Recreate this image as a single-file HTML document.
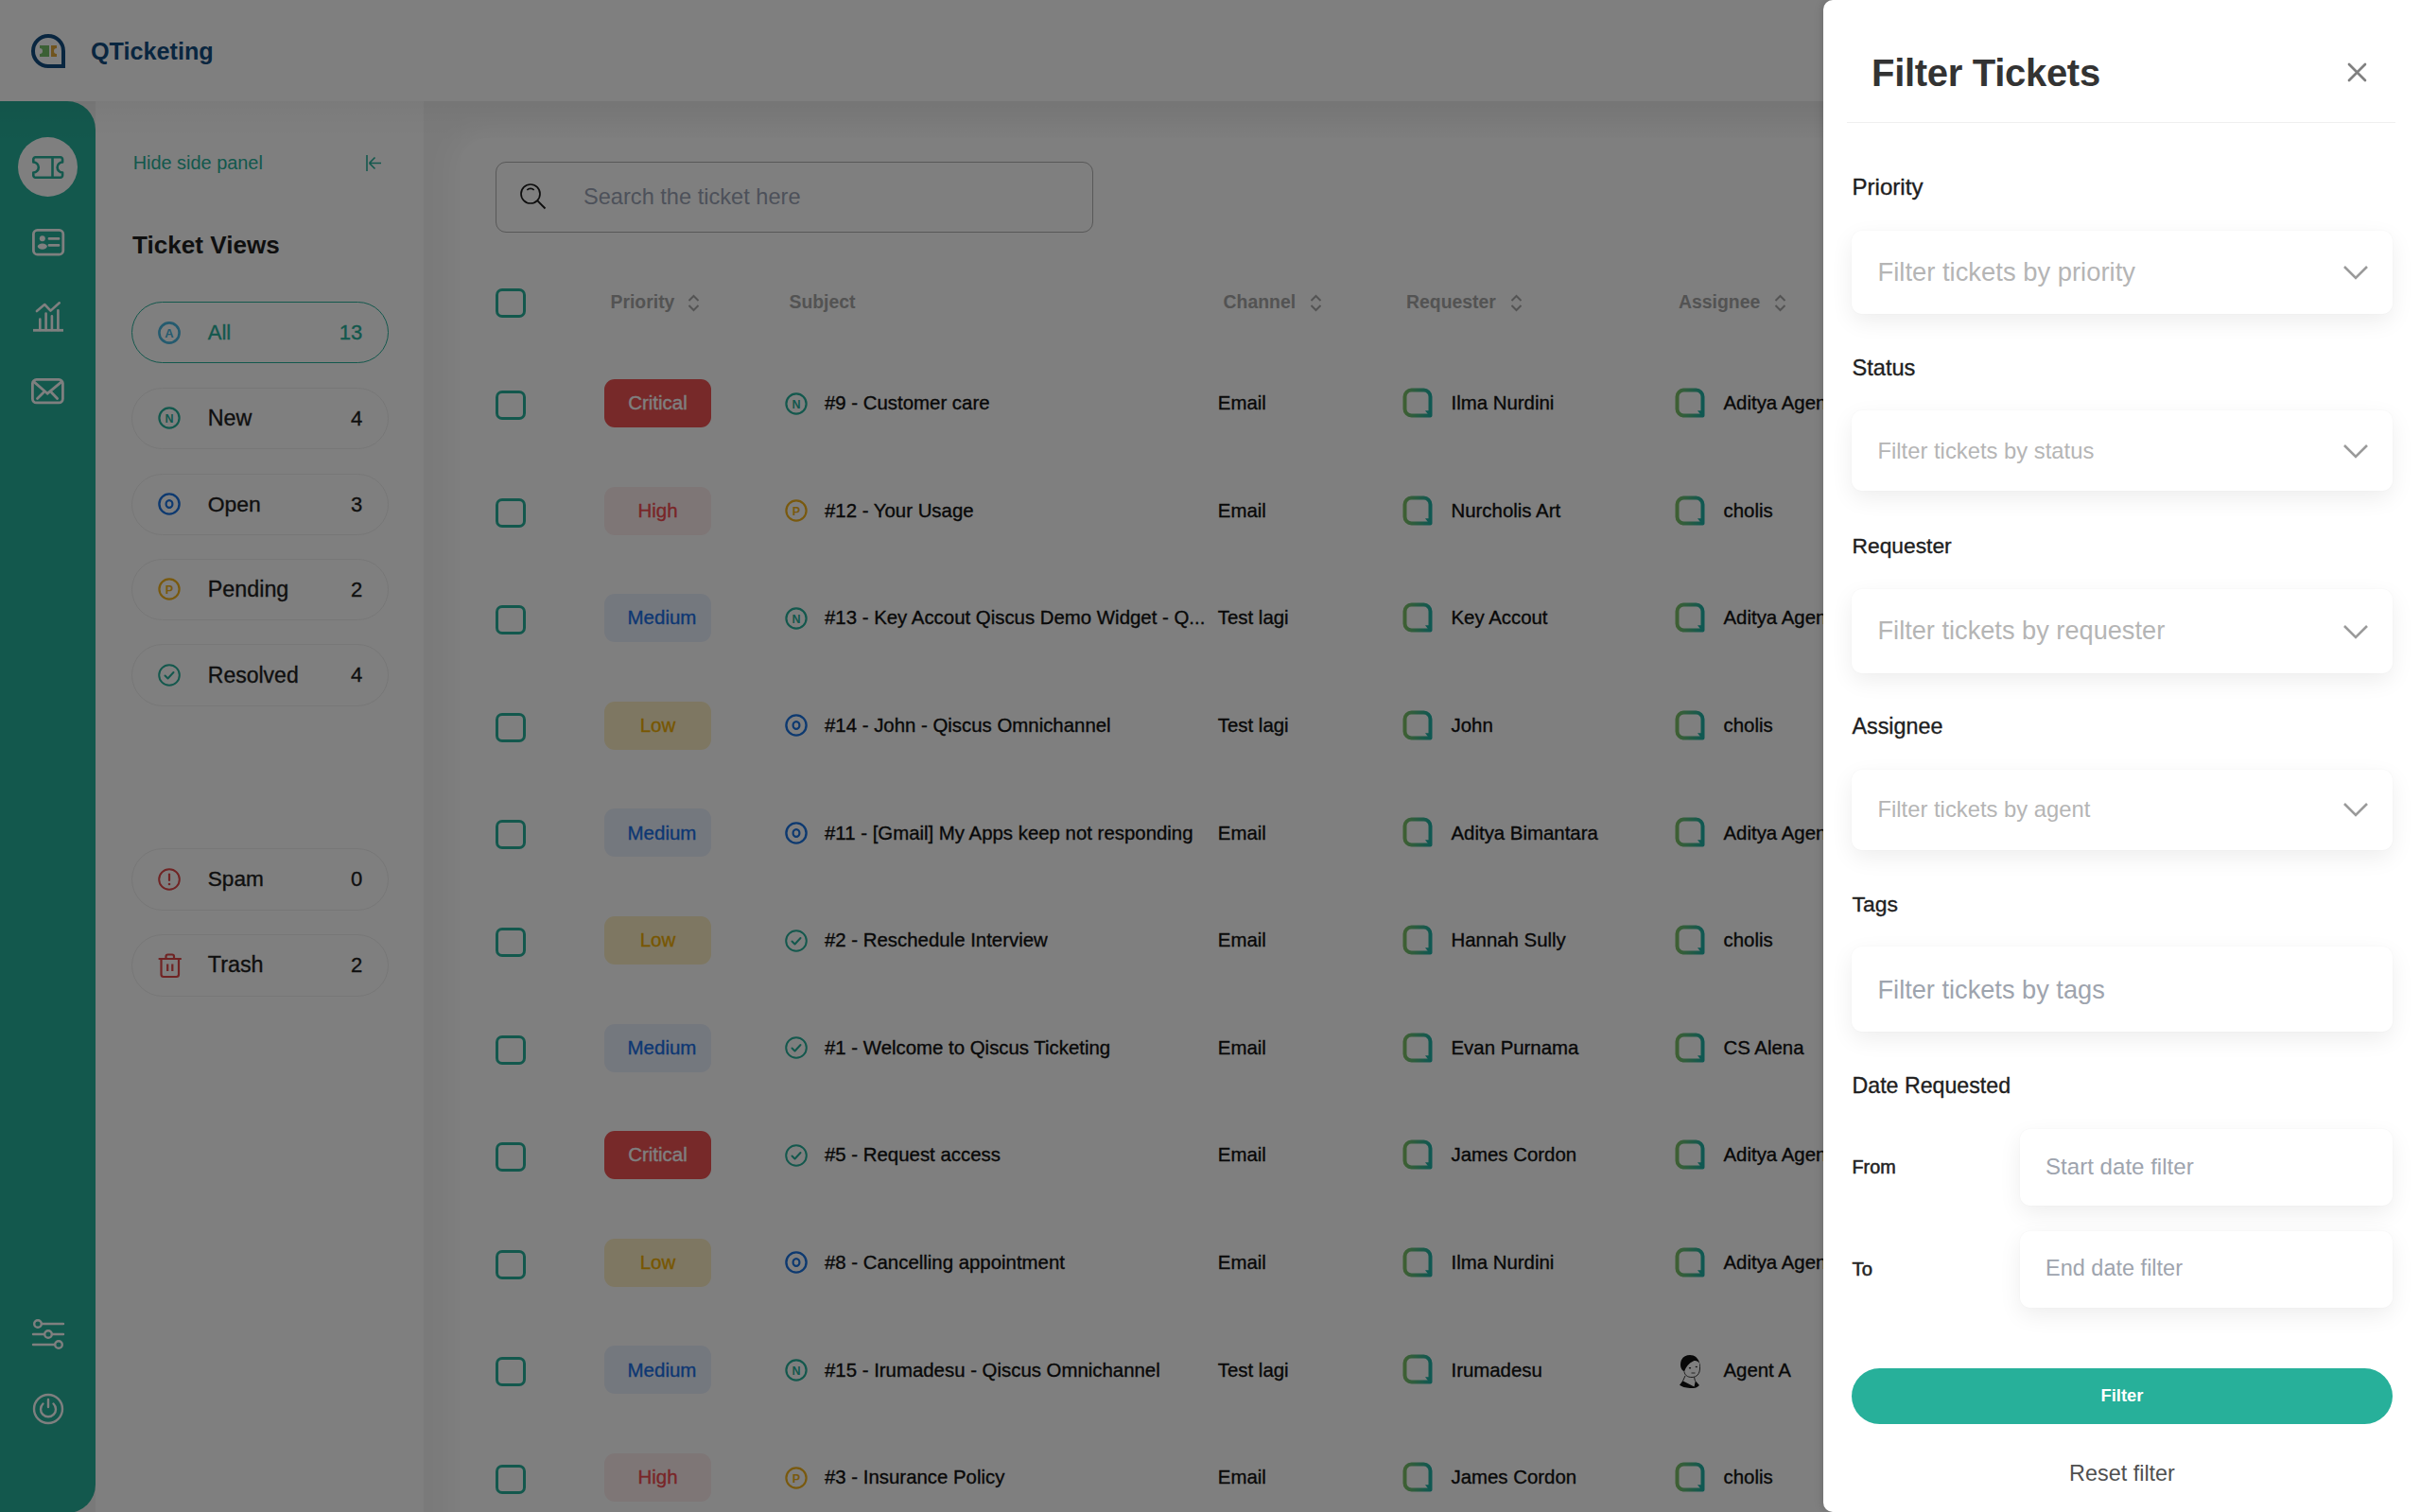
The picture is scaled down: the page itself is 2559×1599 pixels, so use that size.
<!DOCTYPE html>
<html><head><meta charset="utf-8"><style>
html,body{margin:0;padding:0;}
body{width:2559px;height:1599px;overflow:hidden;position:relative;font-family:"Liberation Sans", sans-serif;}
.t{position:absolute;white-space:nowrap;line-height:1;}
.m{-webkit-text-stroke:0.35px currentColor;}
svg{overflow:visible;}
#fp{position:absolute;left:0;top:0;width:2559px;height:1599px;z-index:20;}
</style></head><body>
<div style="position:absolute;left:0.0px;top:0.0px;width:2559.0px;height:1599.0px;background:#ffffff;"></div>
<div style="position:absolute;left:448.0px;top:107.0px;width:2111.0px;height:1492.0px;background:#f5f5f5;"></div>
<div style="position:absolute;left:486.0px;top:146.0px;width:2214.0px;height:1654.0px;background:#ffffff;border-radius:30px;box-shadow:0 0 28px 10px #ffffff;"></div>
<div style="position:absolute;left:101.0px;top:107.0px;width:347.0px;height:1492.0px;background:#ffffff;"></div>
<div style="position:absolute;left:0.0px;top:107.0px;width:2559.0px;height:43.0px;background:linear-gradient(to bottom, rgba(0,0,0,0.04), rgba(0,0,0,0.015) 45%, rgba(0,0,0,0));z-index:2;"></div>
<div style="position:absolute;left:0.0px;top:0.0px;width:2559.0px;height:107.0px;background:#ffffff;z-index:2;"></div>
<div style="position:absolute;left:0;top:0;z-index:3;"><svg style="position:absolute;left:33.0px;top:36.0px;" width="36" height="36" viewBox="0 0 36 36" fill="none"><path d="M18 2 A16 16 0 1 0 18 34 L34 34 L34 18 A16 16 0 0 0 18 2 Z" stroke="#134c80" stroke-width="4"/><path d="M9 12 H19 V24 H9 V21 A3 3 0 0 0 9 15 Z" fill="#78c06a"/><path d="M21 12 H27 V15 A3 3 0 0 0 27 21 V24 H21 Z" fill="#e0a83a"/></svg>
<div class="t" style="left:96.0px;top:41.97px;font-size:25.2px;color:#134c80;font-weight:700;">QTicketing</div>
</div><div style="position:absolute;left:0.0px;top:107.0px;width:101.0px;height:1492.0px;background:#f2f2f2;"></div>
<div style="position:absolute;left:0.0px;top:107.0px;width:101.0px;height:1493.0px;background:#27b09a;border-radius:0 30px 30px 0;"></div>
<div style="position:absolute;left:19.0px;top:145.0px;width:63.0px;height:63.0px;background:#fff;border-radius:50%;"></div>
<svg style="position:absolute;left:34.0px;top:164.8px;" width="34" height="24" viewBox="0 0 34 24" fill="none"><path d="M3.5 1.3 H29.9 A2.2 2.2 0 0 1 32.1 3.5 V6.5 A5.5 5.5 0 0 0 32.1 17.5 V20.5 A2.2 2.2 0 0 1 29.9 22.7 H3.5 A2.2 2.2 0 0 1 1.3 20.5 V17.5 A5.5 5.5 0 0 0 1.3 6.5 V3.5 A2.2 2.2 0 0 1 3.5 1.3 Z" stroke="#27b09a" stroke-width="2.6" stroke-linejoin="round"/><path d="M21.5 2 V22" stroke="#27b09a" stroke-width="2.6"/></svg>
<svg style="position:absolute;left:33.6px;top:241.8px;" width="35" height="29" viewBox="0 0 35 29" fill="none"><rect x="1.4" y="1.4" width="31.4" height="25.7" rx="4.2" stroke="#ffffff" stroke-width="2.8"/><circle cx="10.8" cy="10.2" r="3" fill="#ffffff"/><ellipse cx="10.8" cy="18.6" rx="5" ry="3.1" fill="#ffffff"/><path d="M18 10.4 H28 M18 17.4 H28" stroke="#ffffff" stroke-width="2.8" stroke-linecap="round"/></svg>
<svg style="position:absolute;left:35.0px;top:318.9px;" width="33" height="33" viewBox="0 0 33 33" fill="none"><path d="M3.9 10 L12.2 3 L18.5 9.6 L27.8 1.3" stroke="#ffffff" stroke-width="2.6" stroke-linecap="round" stroke-linejoin="round"/><path d="M7.3 30 V18.5 M13.6 30 V12.5 M19.9 30 V15.3 M26.4 30 V9.2" stroke="#ffffff" stroke-width="2.6" stroke-linecap="round"/><path d="M0 30.3 H32" stroke="#ffffff" stroke-width="2.8"/></svg>
<svg style="position:absolute;left:33.0px;top:399.7px;" width="35" height="28" viewBox="0 0 35 28" fill="none"><rect x="1.4" y="1.4" width="32" height="24.5" rx="4.2" stroke="#ffffff" stroke-width="2.8"/><path d="M3 3.9 L17.2 16.2 L32 3.9 M6.5 21.5 L12.8 15.2 M27.6 21.5 L21.6 15.2" stroke="#ffffff" stroke-width="2.8" stroke-linecap="round"/></svg>
<svg style="position:absolute;left:34.0px;top:1394.0px;" width="34" height="34" viewBox="0 0 34 34" fill="none"><path d="M10 6 H33 M1 17 H12 M21 17 H33 M1 28 H24" stroke="#ffffff" stroke-width="2.4" stroke-linecap="round"/><circle cx="6" cy="6" r="3.8" stroke="#ffffff" stroke-width="2.4"/><circle cx="17" cy="17" r="3.8" stroke="#ffffff" stroke-width="2.4"/><circle cx="28" cy="28" r="3.8" stroke="#ffffff" stroke-width="2.4"/></svg>
<svg style="position:absolute;left:34.0px;top:1473.0px;" width="34" height="34" viewBox="0 0 34 34" fill="none"><circle cx="17" cy="17" r="15" stroke="#ffffff" stroke-width="2.4"/><path d="M11.5 11.5 A8 8 0 1 0 22.5 11.5" stroke="#ffffff" stroke-width="2.4" stroke-linecap="round"/><path d="M17 7 V15" stroke="#ffffff" stroke-width="2.4" stroke-linecap="round"/></svg>
<div class="t" style="left:140.7px;top:162.55px;font-size:19.9px;color:#27b09a;font-weight:400;">Hide side panel</div>
<svg style="position:absolute;left:387.0px;top:163.0px;" width="18" height="19" viewBox="0 0 18 19" fill="none"><path d="M1 1 V18" stroke="#27b09a" stroke-width="1.6"/><path d="M3.5 9.5 H16 M3.5 9.5 L9.5 3.5 M3.5 9.5 L9.5 15.5" stroke="#27b09a" stroke-width="1.6"/></svg>
<div class="t" style="left:140.0px;top:245.91px;font-size:26.1px;color:#1e1e1e;font-weight:700;">Ticket Views</div>
<div style="position:absolute;left:139.0px;top:319.0px;width:272.0px;height:65.0px;border:1.5px solid #27b09a;border-radius:33px;box-sizing:border-box;"></div>
<svg style="position:absolute;left:167.0px;top:339.8px;" width="24" height="24" viewBox="0 0 24 24" fill="none"><circle cx="12" cy="12" r="10.6" stroke="#4ab6de" stroke-width="2.6"/><text x="12" y="16.8" text-anchor="middle" font-family="Liberation Sans" font-weight="700" font-size="13" fill="#4ab6de">A</text></svg>
<div class="t m" style="left:219.8px;top:341.38px;font-size:22px;color:#27b09a;font-weight:400;">All</div>
<div class="t m" style="right:2175.8px;top:341.38px;font-size:22px;color:#27b09a;font-weight:400;">13</div>
<div style="position:absolute;left:139.0px;top:409.5px;width:272.0px;height:65.5px;border:1.5px solid #eeeeee;border-radius:33px;box-sizing:border-box;"></div>
<svg style="position:absolute;left:167.0px;top:430.3px;" width="24" height="24" viewBox="0 0 24 24" fill="none"><circle cx="12" cy="12" r="10.6" stroke="#27b09a" stroke-width="2.2"/><text x="12" y="16.8" text-anchor="middle" font-family="Liberation Sans" font-weight="700" font-size="12.5" fill="#27b09a">N</text></svg>
<div class="t m" style="left:219.8px;top:430.78px;font-size:23.3px;color:#1e1e1e;font-weight:400;">New</div>
<div class="t m" style="right:2175.8px;top:431.88px;font-size:22px;color:#1e1e1e;font-weight:400;">4</div>
<div style="position:absolute;left:139.0px;top:500.5px;width:272.0px;height:65.5px;border:1.5px solid #eeeeee;border-radius:33px;box-sizing:border-box;"></div>
<svg style="position:absolute;left:167.0px;top:521.3px;" width="24" height="24" viewBox="0 0 24 24" fill="none"><circle cx="12" cy="12" r="10.6" stroke="#1a73e0" stroke-width="2.4"/><ellipse cx="12" cy="12" rx="3.4" ry="3.9" stroke="#1a73e0" stroke-width="2.2"/></svg>
<div class="t m" style="left:219.8px;top:522.12px;font-size:22.9px;color:#1e1e1e;font-weight:400;">Open</div>
<div class="t m" style="right:2175.8px;top:522.88px;font-size:22px;color:#1e1e1e;font-weight:400;">3</div>
<div style="position:absolute;left:139.0px;top:590.5px;width:272.0px;height:65.5px;border:1.5px solid #eeeeee;border-radius:33px;box-sizing:border-box;"></div>
<svg style="position:absolute;left:167.0px;top:611.3px;" width="24" height="24" viewBox="0 0 24 24" fill="none"><circle cx="12" cy="12" r="10.6" stroke="#f2b31c" stroke-width="2.2"/><text x="12" y="16.8" text-anchor="middle" font-family="Liberation Sans" font-weight="700" font-size="12.5" fill="#f2b31c">P</text></svg>
<div class="t m" style="left:219.8px;top:611.78px;font-size:23.3px;color:#1e1e1e;font-weight:400;">Pending</div>
<div class="t m" style="right:2175.8px;top:612.88px;font-size:22px;color:#1e1e1e;font-weight:400;">2</div>
<div style="position:absolute;left:139.0px;top:681.0px;width:272.0px;height:65.5px;border:1.5px solid #eeeeee;border-radius:33px;box-sizing:border-box;"></div>
<svg style="position:absolute;left:167.0px;top:701.8px;" width="24" height="24" viewBox="0 0 24 24" fill="none"><circle cx="12" cy="12" r="10.8" stroke="#27b09a" stroke-width="2"/><path d="M7.5 12.5 L10.5 15.5 L16.5 9" stroke="#27b09a" stroke-width="2" stroke-linecap="round" stroke-linejoin="round"/></svg>
<div class="t m" style="left:219.8px;top:702.53px;font-size:23.0px;color:#1e1e1e;font-weight:400;">Resolved</div>
<div class="t m" style="right:2175.8px;top:703.38px;font-size:22px;color:#1e1e1e;font-weight:400;">4</div>
<div style="position:absolute;left:139.0px;top:897.0px;width:272.0px;height:65.5px;border:1.5px solid #eeeeee;border-radius:33px;box-sizing:border-box;"></div>
<svg style="position:absolute;left:167.0px;top:917.8px;" width="24" height="24" viewBox="0 0 24 24" fill="none"><circle cx="12" cy="12" r="10.8" stroke="#e04848" stroke-width="2"/><path d="M12 6.5 V13" stroke="#e04848" stroke-width="2.2" stroke-linecap="round"/><circle cx="12" cy="17" r="1.3" fill="#e04848"/></svg>
<div class="t m" style="left:219.8px;top:918.87px;font-size:22.6px;color:#1e1e1e;font-weight:400;">Spam</div>
<div class="t m" style="right:2175.8px;top:919.38px;font-size:22px;color:#1e1e1e;font-weight:400;">0</div>
<div style="position:absolute;left:139.0px;top:988.0px;width:272.0px;height:65.5px;border:1.5px solid #eeeeee;border-radius:33px;box-sizing:border-box;"></div>
<svg style="position:absolute;left:166.5px;top:1008.3px;" width="26" height="26" viewBox="0 0 26 26" fill="none"><path d="M1.5 6 H24" stroke="#e04848" stroke-width="2.2" stroke-linecap="round"/><path d="M8.5 6 V3.5 A2 2 0 0 1 10.5 1.5 H15 A2 2 0 0 1 17 3.5 V6" stroke="#e04848" stroke-width="2.2"/><path d="M3.5 6.5 V22.5 A2.5 2.5 0 0 0 6 25 H19.5 A2.5 2.5 0 0 0 22 22.5 V6.5" stroke="#e04848" stroke-width="2.2"/><path d="M10.2 11.5 V19 M15.3 11.5 V19" stroke="#e04848" stroke-width="2.2"/></svg>
<div class="t m" style="left:219.8px;top:1009.28px;font-size:23.3px;color:#1e1e1e;font-weight:400;">Trash</div>
<div class="t m" style="right:2175.8px;top:1010.38px;font-size:22px;color:#1e1e1e;font-weight:400;">2</div>
<div style="position:absolute;left:524.0px;top:171.4px;width:631.5px;height:74.4px;border:1.5px solid #b0b0b0;border-radius:11px;box-sizing:border-box;"></div>
<svg style="position:absolute;left:549.0px;top:193.0px;" width="30" height="30" viewBox="0 0 30 30" fill="none"><circle cx="12" cy="12" r="10" stroke="#1a1a1a" stroke-width="1.7"/><path d="M19.2 19.2 L27.5 27.5" stroke="#1a1a1a" stroke-width="1.9"/><path d="M8.3 8 A5 5 0 0 1 15.7 8" stroke="#1a1a1a" stroke-width="1.6"/></svg>
<div class="t" style="left:617.0px;top:196.72px;font-size:23.6px;color:#9aa3b5;font-weight:400;">Search the ticket here</div>
<div style="position:absolute;left:524.0px;top:305.0px;width:31.5px;height:31.0px;border:3.2px solid #27b09a;border-radius:7px;box-sizing:border-box;"></div>
<div class="t" style="left:645.5px;top:309.58px;font-size:19.4px;color:#a6a6a6;font-weight:700;">Priority</div>
<svg style="position:absolute;left:726.5px;top:310.5px;" width="13" height="19" viewBox="0 0 13 19" fill="none"><path d="M1.5 7 L6.5 2 L11.5 7 M1.5 12 L6.5 17 L11.5 12" stroke="#a8a8a8" stroke-width="2"/></svg>
<div class="t" style="left:834.5px;top:310.08px;font-size:19.4px;color:#a6a6a6;font-weight:700;">Subject</div>
<div class="t" style="left:1293.6px;top:309.58px;font-size:19.4px;color:#a6a6a6;font-weight:700;">Channel</div>
<svg style="position:absolute;left:1384.5px;top:310.5px;" width="13" height="19" viewBox="0 0 13 19" fill="none"><path d="M1.5 7 L6.5 2 L11.5 7 M1.5 12 L6.5 17 L11.5 12" stroke="#a8a8a8" stroke-width="2"/></svg>
<div class="t" style="left:1487.0px;top:309.58px;font-size:19.4px;color:#a6a6a6;font-weight:700;">Requester</div>
<svg style="position:absolute;left:1596.5px;top:310.5px;" width="13" height="19" viewBox="0 0 13 19" fill="none"><path d="M1.5 7 L6.5 2 L11.5 7 M1.5 12 L6.5 17 L11.5 12" stroke="#a8a8a8" stroke-width="2"/></svg>
<div class="t" style="left:1775.0px;top:309.58px;font-size:19.4px;color:#a6a6a6;font-weight:700;">Assignee</div>
<svg style="position:absolute;left:1875.5px;top:310.5px;" width="13" height="19" viewBox="0 0 13 19" fill="none"><path d="M1.5 7 L6.5 2 L11.5 7 M1.5 12 L6.5 17 L11.5 12" stroke="#a8a8a8" stroke-width="2"/></svg>
<div style="position:absolute;left:524.0px;top:413.0px;width:31.5px;height:31.0px;border:3.2px solid #27b09a;border-radius:7px;box-sizing:border-box;"></div>
<div style="position:absolute;left:639.0px;top:401.0px;width:113.0px;height:51.0px;background:#ee5353;border-radius:11px;"></div>
<div class="t m" style="left:295.5px;width:800px;text-align:center;top:416.15px;font-size:20.5px;color:#ffffff;font-weight:400;">Critical</div>
<svg style="position:absolute;left:830.1px;top:414.5px;" width="24" height="24" viewBox="0 0 24 24" fill="none"><circle cx="12" cy="12" r="10.6" stroke="#27b09a" stroke-width="2.2"/><text x="12" y="16.8" text-anchor="middle" font-family="Liberation Sans" font-weight="700" font-size="12.5" fill="#27b09a">N</text></svg>
<div class="t m" style="left:872.0px;top:416.23px;font-size:20.4px;color:#111111;font-weight:400;">#9 - Customer care</div>
<div class="t m" style="left:1287.8px;top:416.23px;font-size:20.4px;color:#111111;font-weight:400;">Email</div>
<svg style="position:absolute;left:1483.0px;top:410.0px;" width="32" height="32" viewBox="0 0 32 32" fill="none"><defs><linearGradient id="bg" x1="0" y1="0" x2="1" y2="0"><stop offset="0" stop-color="#7cbf66"/><stop offset="1" stop-color="#1fb0a4"/></linearGradient></defs><path d="M9.5 2.5 H22.5 A7 7 0 0 1 29.5 9.5 V29.5 H9.5 A7 7 0 0 1 2.5 22.5 V9.5 A7 7 0 0 1 9.5 2.5 Z" stroke="url(#bg)" stroke-width="4" stroke-linejoin="round"/><path d="M24 24.3 L28 24.3 L28.5 30 Z" fill="#1fb0a4"/></svg>
<div class="t m" style="left:1534.5px;top:416.23px;font-size:20.4px;color:#111111;font-weight:400;">Ilma Nurdini</div>
<svg style="position:absolute;left:1771.0px;top:410.0px;" width="32" height="32" viewBox="0 0 32 32" fill="none"><defs><linearGradient id="bg" x1="0" y1="0" x2="1" y2="0"><stop offset="0" stop-color="#7cbf66"/><stop offset="1" stop-color="#1fb0a4"/></linearGradient></defs><path d="M9.5 2.5 H22.5 A7 7 0 0 1 29.5 9.5 V29.5 H9.5 A7 7 0 0 1 2.5 22.5 V9.5 A7 7 0 0 1 9.5 2.5 Z" stroke="url(#bg)" stroke-width="4" stroke-linejoin="round"/><path d="M24 24.3 L28 24.3 L28.5 30 Z" fill="#1fb0a4"/></svg>
<div class="t m" style="left:1822.5px;top:416.23px;font-size:20.4px;color:#111111;font-weight:400;">Aditya Agent</div>
<div style="position:absolute;left:524.0px;top:526.6px;width:31.5px;height:31.0px;border:3.2px solid #27b09a;border-radius:7px;box-sizing:border-box;"></div>
<div style="position:absolute;left:639.0px;top:514.6px;width:113.0px;height:51.0px;background:#fdeced;border-radius:11px;"></div>
<div class="t m" style="left:295.5px;width:800px;text-align:center;top:529.75px;font-size:20.5px;color:#f24a4f;font-weight:400;">High</div>
<svg style="position:absolute;left:830.1px;top:528.1px;" width="24" height="24" viewBox="0 0 24 24" fill="none"><circle cx="12" cy="12" r="10.6" stroke="#f2b31c" stroke-width="2.2"/><text x="12" y="16.8" text-anchor="middle" font-family="Liberation Sans" font-weight="700" font-size="12.5" fill="#f2b31c">P</text></svg>
<div class="t m" style="left:872.0px;top:529.83px;font-size:20.4px;color:#111111;font-weight:400;">#12 - Your Usage</div>
<div class="t m" style="left:1287.8px;top:529.83px;font-size:20.4px;color:#111111;font-weight:400;">Email</div>
<svg style="position:absolute;left:1483.0px;top:523.6px;" width="32" height="32" viewBox="0 0 32 32" fill="none"><defs><linearGradient id="bg" x1="0" y1="0" x2="1" y2="0"><stop offset="0" stop-color="#7cbf66"/><stop offset="1" stop-color="#1fb0a4"/></linearGradient></defs><path d="M9.5 2.5 H22.5 A7 7 0 0 1 29.5 9.5 V29.5 H9.5 A7 7 0 0 1 2.5 22.5 V9.5 A7 7 0 0 1 9.5 2.5 Z" stroke="url(#bg)" stroke-width="4" stroke-linejoin="round"/><path d="M24 24.3 L28 24.3 L28.5 30 Z" fill="#1fb0a4"/></svg>
<div class="t m" style="left:1534.5px;top:529.83px;font-size:20.4px;color:#111111;font-weight:400;">Nurcholis Art</div>
<svg style="position:absolute;left:1771.0px;top:523.6px;" width="32" height="32" viewBox="0 0 32 32" fill="none"><defs><linearGradient id="bg" x1="0" y1="0" x2="1" y2="0"><stop offset="0" stop-color="#7cbf66"/><stop offset="1" stop-color="#1fb0a4"/></linearGradient></defs><path d="M9.5 2.5 H22.5 A7 7 0 0 1 29.5 9.5 V29.5 H9.5 A7 7 0 0 1 2.5 22.5 V9.5 A7 7 0 0 1 9.5 2.5 Z" stroke="url(#bg)" stroke-width="4" stroke-linejoin="round"/><path d="M24 24.3 L28 24.3 L28.5 30 Z" fill="#1fb0a4"/></svg>
<div class="t m" style="left:1822.5px;top:529.83px;font-size:20.4px;color:#111111;font-weight:400;">cholis</div>
<div style="position:absolute;left:524.0px;top:640.2px;width:31.5px;height:31.0px;border:3.2px solid #27b09a;border-radius:7px;box-sizing:border-box;"></div>
<div style="position:absolute;left:639.0px;top:628.2px;width:113.0px;height:51.0px;background:#e9f0fc;border-radius:11px;"></div>
<div class="t m" style="left:300.0px;width:800px;text-align:center;top:643.35px;font-size:20.5px;color:#1a6fe6;font-weight:400;">Medium</div>
<svg style="position:absolute;left:830.1px;top:641.7px;" width="24" height="24" viewBox="0 0 24 24" fill="none"><circle cx="12" cy="12" r="10.6" stroke="#27b09a" stroke-width="2.2"/><text x="12" y="16.8" text-anchor="middle" font-family="Liberation Sans" font-weight="700" font-size="12.5" fill="#27b09a">N</text></svg>
<div class="t m" style="left:872.0px;top:643.43px;font-size:20.4px;color:#111111;font-weight:400;">#13 - Key Accout Qiscus Demo Widget - Q...</div>
<div class="t m" style="left:1287.8px;top:643.43px;font-size:20.4px;color:#111111;font-weight:400;">Test lagi</div>
<svg style="position:absolute;left:1483.0px;top:637.2px;" width="32" height="32" viewBox="0 0 32 32" fill="none"><defs><linearGradient id="bg" x1="0" y1="0" x2="1" y2="0"><stop offset="0" stop-color="#7cbf66"/><stop offset="1" stop-color="#1fb0a4"/></linearGradient></defs><path d="M9.5 2.5 H22.5 A7 7 0 0 1 29.5 9.5 V29.5 H9.5 A7 7 0 0 1 2.5 22.5 V9.5 A7 7 0 0 1 9.5 2.5 Z" stroke="url(#bg)" stroke-width="4" stroke-linejoin="round"/><path d="M24 24.3 L28 24.3 L28.5 30 Z" fill="#1fb0a4"/></svg>
<div class="t m" style="left:1534.5px;top:643.43px;font-size:20.4px;color:#111111;font-weight:400;">Key Accout</div>
<svg style="position:absolute;left:1771.0px;top:637.2px;" width="32" height="32" viewBox="0 0 32 32" fill="none"><defs><linearGradient id="bg" x1="0" y1="0" x2="1" y2="0"><stop offset="0" stop-color="#7cbf66"/><stop offset="1" stop-color="#1fb0a4"/></linearGradient></defs><path d="M9.5 2.5 H22.5 A7 7 0 0 1 29.5 9.5 V29.5 H9.5 A7 7 0 0 1 2.5 22.5 V9.5 A7 7 0 0 1 9.5 2.5 Z" stroke="url(#bg)" stroke-width="4" stroke-linejoin="round"/><path d="M24 24.3 L28 24.3 L28.5 30 Z" fill="#1fb0a4"/></svg>
<div class="t m" style="left:1822.5px;top:643.43px;font-size:20.4px;color:#111111;font-weight:400;">Aditya Agent</div>
<div style="position:absolute;left:524.0px;top:753.8px;width:31.5px;height:31.0px;border:3.2px solid #27b09a;border-radius:7px;box-sizing:border-box;"></div>
<div style="position:absolute;left:639.0px;top:741.8px;width:113.0px;height:51.0px;background:#fcefc4;border-radius:11px;"></div>
<div class="t m" style="left:295.5px;width:800px;text-align:center;top:756.95px;font-size:20.5px;color:#f0ad00;font-weight:400;">Low</div>
<svg style="position:absolute;left:830.1px;top:755.3px;" width="24" height="24" viewBox="0 0 24 24" fill="none"><circle cx="12" cy="12" r="10.6" stroke="#1a73e0" stroke-width="2.4"/><ellipse cx="12" cy="12" rx="3.4" ry="3.9" stroke="#1a73e0" stroke-width="2.2"/></svg>
<div class="t m" style="left:872.0px;top:757.03px;font-size:20.4px;color:#111111;font-weight:400;">#14 - John - Qiscus Omnichannel</div>
<div class="t m" style="left:1287.8px;top:757.03px;font-size:20.4px;color:#111111;font-weight:400;">Test lagi</div>
<svg style="position:absolute;left:1483.0px;top:750.8px;" width="32" height="32" viewBox="0 0 32 32" fill="none"><defs><linearGradient id="bg" x1="0" y1="0" x2="1" y2="0"><stop offset="0" stop-color="#7cbf66"/><stop offset="1" stop-color="#1fb0a4"/></linearGradient></defs><path d="M9.5 2.5 H22.5 A7 7 0 0 1 29.5 9.5 V29.5 H9.5 A7 7 0 0 1 2.5 22.5 V9.5 A7 7 0 0 1 9.5 2.5 Z" stroke="url(#bg)" stroke-width="4" stroke-linejoin="round"/><path d="M24 24.3 L28 24.3 L28.5 30 Z" fill="#1fb0a4"/></svg>
<div class="t m" style="left:1534.5px;top:757.03px;font-size:20.4px;color:#111111;font-weight:400;">John</div>
<svg style="position:absolute;left:1771.0px;top:750.8px;" width="32" height="32" viewBox="0 0 32 32" fill="none"><defs><linearGradient id="bg" x1="0" y1="0" x2="1" y2="0"><stop offset="0" stop-color="#7cbf66"/><stop offset="1" stop-color="#1fb0a4"/></linearGradient></defs><path d="M9.5 2.5 H22.5 A7 7 0 0 1 29.5 9.5 V29.5 H9.5 A7 7 0 0 1 2.5 22.5 V9.5 A7 7 0 0 1 9.5 2.5 Z" stroke="url(#bg)" stroke-width="4" stroke-linejoin="round"/><path d="M24 24.3 L28 24.3 L28.5 30 Z" fill="#1fb0a4"/></svg>
<div class="t m" style="left:1822.5px;top:757.03px;font-size:20.4px;color:#111111;font-weight:400;">cholis</div>
<div style="position:absolute;left:524.0px;top:867.4px;width:31.5px;height:31.0px;border:3.2px solid #27b09a;border-radius:7px;box-sizing:border-box;"></div>
<div style="position:absolute;left:639.0px;top:855.4px;width:113.0px;height:51.0px;background:#e9f0fc;border-radius:11px;"></div>
<div class="t m" style="left:300.0px;width:800px;text-align:center;top:870.55px;font-size:20.5px;color:#1a6fe6;font-weight:400;">Medium</div>
<svg style="position:absolute;left:830.1px;top:868.9px;" width="24" height="24" viewBox="0 0 24 24" fill="none"><circle cx="12" cy="12" r="10.6" stroke="#1a73e0" stroke-width="2.4"/><ellipse cx="12" cy="12" rx="3.4" ry="3.9" stroke="#1a73e0" stroke-width="2.2"/></svg>
<div class="t m" style="left:872.0px;top:870.63px;font-size:20.4px;color:#111111;font-weight:400;">#11 - [Gmail] My Apps keep not responding</div>
<div class="t m" style="left:1287.8px;top:870.63px;font-size:20.4px;color:#111111;font-weight:400;">Email</div>
<svg style="position:absolute;left:1483.0px;top:864.4px;" width="32" height="32" viewBox="0 0 32 32" fill="none"><defs><linearGradient id="bg" x1="0" y1="0" x2="1" y2="0"><stop offset="0" stop-color="#7cbf66"/><stop offset="1" stop-color="#1fb0a4"/></linearGradient></defs><path d="M9.5 2.5 H22.5 A7 7 0 0 1 29.5 9.5 V29.5 H9.5 A7 7 0 0 1 2.5 22.5 V9.5 A7 7 0 0 1 9.5 2.5 Z" stroke="url(#bg)" stroke-width="4" stroke-linejoin="round"/><path d="M24 24.3 L28 24.3 L28.5 30 Z" fill="#1fb0a4"/></svg>
<div class="t m" style="left:1534.5px;top:870.63px;font-size:20.4px;color:#111111;font-weight:400;">Aditya Bimantara</div>
<svg style="position:absolute;left:1771.0px;top:864.4px;" width="32" height="32" viewBox="0 0 32 32" fill="none"><defs><linearGradient id="bg" x1="0" y1="0" x2="1" y2="0"><stop offset="0" stop-color="#7cbf66"/><stop offset="1" stop-color="#1fb0a4"/></linearGradient></defs><path d="M9.5 2.5 H22.5 A7 7 0 0 1 29.5 9.5 V29.5 H9.5 A7 7 0 0 1 2.5 22.5 V9.5 A7 7 0 0 1 9.5 2.5 Z" stroke="url(#bg)" stroke-width="4" stroke-linejoin="round"/><path d="M24 24.3 L28 24.3 L28.5 30 Z" fill="#1fb0a4"/></svg>
<div class="t m" style="left:1822.5px;top:870.63px;font-size:20.4px;color:#111111;font-weight:400;">Aditya Agent</div>
<div style="position:absolute;left:524.0px;top:981.0px;width:31.5px;height:31.0px;border:3.2px solid #27b09a;border-radius:7px;box-sizing:border-box;"></div>
<div style="position:absolute;left:639.0px;top:969.0px;width:113.0px;height:51.0px;background:#fcefc4;border-radius:11px;"></div>
<div class="t m" style="left:295.5px;width:800px;text-align:center;top:984.15px;font-size:20.5px;color:#f0ad00;font-weight:400;">Low</div>
<svg style="position:absolute;left:830.1px;top:982.5px;" width="24" height="24" viewBox="0 0 24 24" fill="none"><circle cx="12" cy="12" r="10.8" stroke="#27b09a" stroke-width="2"/><path d="M7.5 12.5 L10.5 15.5 L16.5 9" stroke="#27b09a" stroke-width="2" stroke-linecap="round" stroke-linejoin="round"/></svg>
<div class="t m" style="left:872.0px;top:984.23px;font-size:20.4px;color:#111111;font-weight:400;">#2 - Reschedule Interview</div>
<div class="t m" style="left:1287.8px;top:984.23px;font-size:20.4px;color:#111111;font-weight:400;">Email</div>
<svg style="position:absolute;left:1483.0px;top:978.0px;" width="32" height="32" viewBox="0 0 32 32" fill="none"><defs><linearGradient id="bg" x1="0" y1="0" x2="1" y2="0"><stop offset="0" stop-color="#7cbf66"/><stop offset="1" stop-color="#1fb0a4"/></linearGradient></defs><path d="M9.5 2.5 H22.5 A7 7 0 0 1 29.5 9.5 V29.5 H9.5 A7 7 0 0 1 2.5 22.5 V9.5 A7 7 0 0 1 9.5 2.5 Z" stroke="url(#bg)" stroke-width="4" stroke-linejoin="round"/><path d="M24 24.3 L28 24.3 L28.5 30 Z" fill="#1fb0a4"/></svg>
<div class="t m" style="left:1534.5px;top:984.23px;font-size:20.4px;color:#111111;font-weight:400;">Hannah Sully</div>
<svg style="position:absolute;left:1771.0px;top:978.0px;" width="32" height="32" viewBox="0 0 32 32" fill="none"><defs><linearGradient id="bg" x1="0" y1="0" x2="1" y2="0"><stop offset="0" stop-color="#7cbf66"/><stop offset="1" stop-color="#1fb0a4"/></linearGradient></defs><path d="M9.5 2.5 H22.5 A7 7 0 0 1 29.5 9.5 V29.5 H9.5 A7 7 0 0 1 2.5 22.5 V9.5 A7 7 0 0 1 9.5 2.5 Z" stroke="url(#bg)" stroke-width="4" stroke-linejoin="round"/><path d="M24 24.3 L28 24.3 L28.5 30 Z" fill="#1fb0a4"/></svg>
<div class="t m" style="left:1822.5px;top:984.23px;font-size:20.4px;color:#111111;font-weight:400;">cholis</div>
<div style="position:absolute;left:524.0px;top:1094.6px;width:31.5px;height:31.0px;border:3.2px solid #27b09a;border-radius:7px;box-sizing:border-box;"></div>
<div style="position:absolute;left:639.0px;top:1082.6px;width:113.0px;height:51.0px;background:#e9f0fc;border-radius:11px;"></div>
<div class="t m" style="left:300.0px;width:800px;text-align:center;top:1097.75px;font-size:20.5px;color:#1a6fe6;font-weight:400;">Medium</div>
<svg style="position:absolute;left:830.1px;top:1096.1px;" width="24" height="24" viewBox="0 0 24 24" fill="none"><circle cx="12" cy="12" r="10.8" stroke="#27b09a" stroke-width="2"/><path d="M7.5 12.5 L10.5 15.5 L16.5 9" stroke="#27b09a" stroke-width="2" stroke-linecap="round" stroke-linejoin="round"/></svg>
<div class="t m" style="left:872.0px;top:1097.83px;font-size:20.4px;color:#111111;font-weight:400;">#1 - Welcome to Qiscus Ticketing</div>
<div class="t m" style="left:1287.8px;top:1097.83px;font-size:20.4px;color:#111111;font-weight:400;">Email</div>
<svg style="position:absolute;left:1483.0px;top:1091.6px;" width="32" height="32" viewBox="0 0 32 32" fill="none"><defs><linearGradient id="bg" x1="0" y1="0" x2="1" y2="0"><stop offset="0" stop-color="#7cbf66"/><stop offset="1" stop-color="#1fb0a4"/></linearGradient></defs><path d="M9.5 2.5 H22.5 A7 7 0 0 1 29.5 9.5 V29.5 H9.5 A7 7 0 0 1 2.5 22.5 V9.5 A7 7 0 0 1 9.5 2.5 Z" stroke="url(#bg)" stroke-width="4" stroke-linejoin="round"/><path d="M24 24.3 L28 24.3 L28.5 30 Z" fill="#1fb0a4"/></svg>
<div class="t m" style="left:1534.5px;top:1097.83px;font-size:20.4px;color:#111111;font-weight:400;">Evan Purnama</div>
<svg style="position:absolute;left:1771.0px;top:1091.6px;" width="32" height="32" viewBox="0 0 32 32" fill="none"><defs><linearGradient id="bg" x1="0" y1="0" x2="1" y2="0"><stop offset="0" stop-color="#7cbf66"/><stop offset="1" stop-color="#1fb0a4"/></linearGradient></defs><path d="M9.5 2.5 H22.5 A7 7 0 0 1 29.5 9.5 V29.5 H9.5 A7 7 0 0 1 2.5 22.5 V9.5 A7 7 0 0 1 9.5 2.5 Z" stroke="url(#bg)" stroke-width="4" stroke-linejoin="round"/><path d="M24 24.3 L28 24.3 L28.5 30 Z" fill="#1fb0a4"/></svg>
<div class="t m" style="left:1822.5px;top:1097.83px;font-size:20.4px;color:#111111;font-weight:400;">CS Alena</div>
<div style="position:absolute;left:524.0px;top:1208.2px;width:31.5px;height:31.0px;border:3.2px solid #27b09a;border-radius:7px;box-sizing:border-box;"></div>
<div style="position:absolute;left:639.0px;top:1196.2px;width:113.0px;height:51.0px;background:#ee5353;border-radius:11px;"></div>
<div class="t m" style="left:295.5px;width:800px;text-align:center;top:1211.35px;font-size:20.5px;color:#ffffff;font-weight:400;">Critical</div>
<svg style="position:absolute;left:830.1px;top:1209.7px;" width="24" height="24" viewBox="0 0 24 24" fill="none"><circle cx="12" cy="12" r="10.8" stroke="#27b09a" stroke-width="2"/><path d="M7.5 12.5 L10.5 15.5 L16.5 9" stroke="#27b09a" stroke-width="2" stroke-linecap="round" stroke-linejoin="round"/></svg>
<div class="t m" style="left:872.0px;top:1211.43px;font-size:20.4px;color:#111111;font-weight:400;">#5 - Request access</div>
<div class="t m" style="left:1287.8px;top:1211.43px;font-size:20.4px;color:#111111;font-weight:400;">Email</div>
<svg style="position:absolute;left:1483.0px;top:1205.2px;" width="32" height="32" viewBox="0 0 32 32" fill="none"><defs><linearGradient id="bg" x1="0" y1="0" x2="1" y2="0"><stop offset="0" stop-color="#7cbf66"/><stop offset="1" stop-color="#1fb0a4"/></linearGradient></defs><path d="M9.5 2.5 H22.5 A7 7 0 0 1 29.5 9.5 V29.5 H9.5 A7 7 0 0 1 2.5 22.5 V9.5 A7 7 0 0 1 9.5 2.5 Z" stroke="url(#bg)" stroke-width="4" stroke-linejoin="round"/><path d="M24 24.3 L28 24.3 L28.5 30 Z" fill="#1fb0a4"/></svg>
<div class="t m" style="left:1534.5px;top:1211.43px;font-size:20.4px;color:#111111;font-weight:400;">James Cordon</div>
<svg style="position:absolute;left:1771.0px;top:1205.2px;" width="32" height="32" viewBox="0 0 32 32" fill="none"><defs><linearGradient id="bg" x1="0" y1="0" x2="1" y2="0"><stop offset="0" stop-color="#7cbf66"/><stop offset="1" stop-color="#1fb0a4"/></linearGradient></defs><path d="M9.5 2.5 H22.5 A7 7 0 0 1 29.5 9.5 V29.5 H9.5 A7 7 0 0 1 2.5 22.5 V9.5 A7 7 0 0 1 9.5 2.5 Z" stroke="url(#bg)" stroke-width="4" stroke-linejoin="round"/><path d="M24 24.3 L28 24.3 L28.5 30 Z" fill="#1fb0a4"/></svg>
<div class="t m" style="left:1822.5px;top:1211.43px;font-size:20.4px;color:#111111;font-weight:400;">Aditya Agent</div>
<div style="position:absolute;left:524.0px;top:1321.8px;width:31.5px;height:31.0px;border:3.2px solid #27b09a;border-radius:7px;box-sizing:border-box;"></div>
<div style="position:absolute;left:639.0px;top:1309.8px;width:113.0px;height:51.0px;background:#fcefc4;border-radius:11px;"></div>
<div class="t m" style="left:295.5px;width:800px;text-align:center;top:1324.95px;font-size:20.5px;color:#f0ad00;font-weight:400;">Low</div>
<svg style="position:absolute;left:830.1px;top:1323.3px;" width="24" height="24" viewBox="0 0 24 24" fill="none"><circle cx="12" cy="12" r="10.6" stroke="#1a73e0" stroke-width="2.4"/><ellipse cx="12" cy="12" rx="3.4" ry="3.9" stroke="#1a73e0" stroke-width="2.2"/></svg>
<div class="t m" style="left:872.0px;top:1325.03px;font-size:20.4px;color:#111111;font-weight:400;">#8 - Cancelling appointment</div>
<div class="t m" style="left:1287.8px;top:1325.03px;font-size:20.4px;color:#111111;font-weight:400;">Email</div>
<svg style="position:absolute;left:1483.0px;top:1318.8px;" width="32" height="32" viewBox="0 0 32 32" fill="none"><defs><linearGradient id="bg" x1="0" y1="0" x2="1" y2="0"><stop offset="0" stop-color="#7cbf66"/><stop offset="1" stop-color="#1fb0a4"/></linearGradient></defs><path d="M9.5 2.5 H22.5 A7 7 0 0 1 29.5 9.5 V29.5 H9.5 A7 7 0 0 1 2.5 22.5 V9.5 A7 7 0 0 1 9.5 2.5 Z" stroke="url(#bg)" stroke-width="4" stroke-linejoin="round"/><path d="M24 24.3 L28 24.3 L28.5 30 Z" fill="#1fb0a4"/></svg>
<div class="t m" style="left:1534.5px;top:1325.03px;font-size:20.4px;color:#111111;font-weight:400;">Ilma Nurdini</div>
<svg style="position:absolute;left:1771.0px;top:1318.8px;" width="32" height="32" viewBox="0 0 32 32" fill="none"><defs><linearGradient id="bg" x1="0" y1="0" x2="1" y2="0"><stop offset="0" stop-color="#7cbf66"/><stop offset="1" stop-color="#1fb0a4"/></linearGradient></defs><path d="M9.5 2.5 H22.5 A7 7 0 0 1 29.5 9.5 V29.5 H9.5 A7 7 0 0 1 2.5 22.5 V9.5 A7 7 0 0 1 9.5 2.5 Z" stroke="url(#bg)" stroke-width="4" stroke-linejoin="round"/><path d="M24 24.3 L28 24.3 L28.5 30 Z" fill="#1fb0a4"/></svg>
<div class="t m" style="left:1822.5px;top:1325.03px;font-size:20.4px;color:#111111;font-weight:400;">Aditya Agent</div>
<div style="position:absolute;left:524.0px;top:1435.4px;width:31.5px;height:31.0px;border:3.2px solid #27b09a;border-radius:7px;box-sizing:border-box;"></div>
<div style="position:absolute;left:639.0px;top:1423.4px;width:113.0px;height:51.0px;background:#e9f0fc;border-radius:11px;"></div>
<div class="t m" style="left:300.0px;width:800px;text-align:center;top:1438.55px;font-size:20.5px;color:#1a6fe6;font-weight:400;">Medium</div>
<svg style="position:absolute;left:830.1px;top:1436.9px;" width="24" height="24" viewBox="0 0 24 24" fill="none"><circle cx="12" cy="12" r="10.6" stroke="#27b09a" stroke-width="2.2"/><text x="12" y="16.8" text-anchor="middle" font-family="Liberation Sans" font-weight="700" font-size="12.5" fill="#27b09a">N</text></svg>
<div class="t m" style="left:872.0px;top:1438.63px;font-size:20.4px;color:#111111;font-weight:400;">#15 - Irumadesu - Qiscus Omnichannel</div>
<div class="t m" style="left:1287.8px;top:1438.63px;font-size:20.4px;color:#111111;font-weight:400;">Test lagi</div>
<svg style="position:absolute;left:1483.0px;top:1432.4px;" width="32" height="32" viewBox="0 0 32 32" fill="none"><defs><linearGradient id="bg" x1="0" y1="0" x2="1" y2="0"><stop offset="0" stop-color="#7cbf66"/><stop offset="1" stop-color="#1fb0a4"/></linearGradient></defs><path d="M9.5 2.5 H22.5 A7 7 0 0 1 29.5 9.5 V29.5 H9.5 A7 7 0 0 1 2.5 22.5 V9.5 A7 7 0 0 1 9.5 2.5 Z" stroke="url(#bg)" stroke-width="4" stroke-linejoin="round"/><path d="M24 24.3 L28 24.3 L28.5 30 Z" fill="#1fb0a4"/></svg>
<div class="t m" style="left:1534.5px;top:1438.63px;font-size:20.4px;color:#111111;font-weight:400;">Irumadesu</div>
<svg style="position:absolute;left:1776.0px;top:1433.2px;" width="24" height="38" viewBox="0 0 24 38" fill="none"><path d="M1 10 C1 3 6 0 11 0 C16 0 20 3 21.5 9.5 C19.5 6 16.5 5.5 14.5 6.5 C10 8.5 7 12 5 17.5 C2 16 1 13 1 10 Z" fill="#111"/><path d="M5 17.5 C5.5 21 8 23.5 13 23.5 C18 23.5 21.5 20 21.5 14 C21.5 12 21.5 10.5 21.5 9.5" stroke="#222" stroke-width="0.9"/><ellipse cx="11" cy="13.8" rx="1.2" ry="0.8" fill="#111"/><ellipse cx="17.8" cy="12.5" rx="1.1" ry="0.7" fill="#222"/><path d="M12.5 19 H16.5" stroke="#333" stroke-width="0.9"/><path d="M6 22 L3.5 27.5 M15.5 23.5 L16.5 27.5" stroke="#222" stroke-width="0.9"/><path d="M0 31.8 L3.3 27.3 L15.5 33.5 L16.8 27.3 L21 32 C19 34 17 35 15 35 C8 35 3 34 0 31.8 Z" fill="#111"/></svg>
<div class="t m" style="left:1822.5px;top:1438.63px;font-size:20.4px;color:#111111;font-weight:400;">Agent A</div>
<div style="position:absolute;left:524.0px;top:1549.0px;width:31.5px;height:31.0px;border:3.2px solid #27b09a;border-radius:7px;box-sizing:border-box;"></div>
<div style="position:absolute;left:639.0px;top:1537.0px;width:113.0px;height:51.0px;background:#fdeced;border-radius:11px;"></div>
<div class="t m" style="left:295.5px;width:800px;text-align:center;top:1552.15px;font-size:20.5px;color:#f24a4f;font-weight:400;">High</div>
<svg style="position:absolute;left:830.1px;top:1550.5px;" width="24" height="24" viewBox="0 0 24 24" fill="none"><circle cx="12" cy="12" r="10.6" stroke="#f2b31c" stroke-width="2.2"/><text x="12" y="16.8" text-anchor="middle" font-family="Liberation Sans" font-weight="700" font-size="12.5" fill="#f2b31c">P</text></svg>
<div class="t m" style="left:872.0px;top:1552.23px;font-size:20.4px;color:#111111;font-weight:400;">#3 - Insurance Policy</div>
<div class="t m" style="left:1287.8px;top:1552.23px;font-size:20.4px;color:#111111;font-weight:400;">Email</div>
<svg style="position:absolute;left:1483.0px;top:1546.0px;" width="32" height="32" viewBox="0 0 32 32" fill="none"><defs><linearGradient id="bg" x1="0" y1="0" x2="1" y2="0"><stop offset="0" stop-color="#7cbf66"/><stop offset="1" stop-color="#1fb0a4"/></linearGradient></defs><path d="M9.5 2.5 H22.5 A7 7 0 0 1 29.5 9.5 V29.5 H9.5 A7 7 0 0 1 2.5 22.5 V9.5 A7 7 0 0 1 9.5 2.5 Z" stroke="url(#bg)" stroke-width="4" stroke-linejoin="round"/><path d="M24 24.3 L28 24.3 L28.5 30 Z" fill="#1fb0a4"/></svg>
<div class="t m" style="left:1534.5px;top:1552.23px;font-size:20.4px;color:#111111;font-weight:400;">James Cordon</div>
<svg style="position:absolute;left:1771.0px;top:1546.0px;" width="32" height="32" viewBox="0 0 32 32" fill="none"><defs><linearGradient id="bg" x1="0" y1="0" x2="1" y2="0"><stop offset="0" stop-color="#7cbf66"/><stop offset="1" stop-color="#1fb0a4"/></linearGradient></defs><path d="M9.5 2.5 H22.5 A7 7 0 0 1 29.5 9.5 V29.5 H9.5 A7 7 0 0 1 2.5 22.5 V9.5 A7 7 0 0 1 9.5 2.5 Z" stroke="url(#bg)" stroke-width="4" stroke-linejoin="round"/><path d="M24 24.3 L28 24.3 L28.5 30 Z" fill="#1fb0a4"/></svg>
<div class="t m" style="left:1822.5px;top:1552.23px;font-size:20.4px;color:#111111;font-weight:400;">cholis</div>
<div style="position:absolute;left:0.0px;top:0.0px;width:2559.0px;height:1599.0px;background:rgba(0,0,0,0.5);z-index:10;"></div>
<div id="fp">
<div style="position:absolute;left:1928.0px;top:0.0px;width:631.0px;height:1599.0px;background:#ffffff;border-radius:10px 0 0 10px;box-shadow:-2px 0 8px rgba(0,0,0,0.12);"></div>
<div class="t" style="left:1979.0px;top:57.14px;font-size:40px;color:#333333;font-weight:700;letter-spacing:-0.3px;">Filter Tickets</div>
<svg style="position:absolute;left:2481.0px;top:65.0px;" width="23" height="23" viewBox="0 0 23 23" fill="none"><path d="M3 3 L20 20 M20 3 L3 20" stroke="#808080" stroke-width="2.7" stroke-linecap="round"/></svg>
<div style="position:absolute;left:1953.0px;top:128.5px;width:580.0px;height:1.5px;background:#efefef;"></div>
<div class="t m" style="left:1958.5px;top:185.60px;font-size:24.1px;color:#1e1e1e;font-weight:400;">Priority</div>
<div class="t m" style="left:1958.5px;top:377.52px;font-size:23.6px;color:#1e1e1e;font-weight:400;">Status</div>
<div class="t m" style="left:1958.5px;top:565.70px;font-size:22.8px;color:#1e1e1e;font-weight:400;">Requester</div>
<div class="t m" style="left:1958.5px;top:757.28px;font-size:23.3px;color:#1e1e1e;font-weight:400;">Assignee</div>
<div class="t m" style="left:1958.5px;top:944.62px;font-size:22.9px;color:#1e1e1e;font-weight:400;">Tags</div>
<div class="t m" style="left:1958.5px;top:1137.16px;font-size:23.2px;color:#1e1e1e;font-weight:400;">Date Requested</div>
<div style="position:absolute;left:1958.0px;top:243.5px;width:572.0px;height:88.5px;background:#fff;border-radius:11px;box-shadow:0 8px 24px rgba(0,0,0,0.07), 0 0 2px rgba(0,0,0,0.04);"></div>
<div class="t" style="left:1985.5px;top:273.91px;font-size:27.4px;color:#b5b5b5;font-weight:400;">Filter tickets by priority</div>
<svg style="position:absolute;left:2477.0px;top:279.8px;" width="28" height="16" viewBox="0 0 28 16" fill="none"><path d="M2 2 L14 14 L26 2" stroke="#9a9a9a" stroke-width="2.6"/></svg>
<div style="position:absolute;left:1958.0px;top:434.0px;width:572.0px;height:85.0px;background:#fff;border-radius:11px;box-shadow:0 8px 24px rgba(0,0,0,0.07), 0 0 2px rgba(0,0,0,0.04);"></div>
<div class="t" style="left:1985.5px;top:464.65px;font-size:23.8px;color:#b5b5b5;font-weight:400;">Filter tickets by status</div>
<svg style="position:absolute;left:2477.0px;top:468.5px;" width="28" height="16" viewBox="0 0 28 16" fill="none"><path d="M2 2 L14 14 L26 2" stroke="#9a9a9a" stroke-width="2.6"/></svg>
<div style="position:absolute;left:1958.0px;top:623.0px;width:572.0px;height:89.0px;background:#fff;border-radius:11px;box-shadow:0 8px 24px rgba(0,0,0,0.07), 0 0 2px rgba(0,0,0,0.04);"></div>
<div class="t" style="left:1985.5px;top:652.98px;font-size:27.2px;color:#b5b5b5;font-weight:400;">Filter tickets by requester</div>
<svg style="position:absolute;left:2477.0px;top:659.5px;" width="28" height="16" viewBox="0 0 28 16" fill="none"><path d="M2 2 L14 14 L26 2" stroke="#9a9a9a" stroke-width="2.6"/></svg>
<div style="position:absolute;left:1958.0px;top:814.0px;width:572.0px;height:84.5px;background:#fff;border-radius:11px;box-shadow:0 8px 24px rgba(0,0,0,0.07), 0 0 2px rgba(0,0,0,0.04);"></div>
<div class="t" style="left:1985.5px;top:843.55px;font-size:23.8px;color:#b5b5b5;font-weight:400;">Filter tickets by agent</div>
<svg style="position:absolute;left:2477.0px;top:848.2px;" width="28" height="16" viewBox="0 0 28 16" fill="none"><path d="M2 2 L14 14 L26 2" stroke="#9a9a9a" stroke-width="2.6"/></svg>
<div style="position:absolute;left:1958.0px;top:1001.0px;width:572.0px;height:89.5px;background:#fff;border-radius:11px;box-shadow:0 8px 24px rgba(0,0,0,0.07), 0 0 2px rgba(0,0,0,0.04);"></div>
<div class="t" style="left:1985.5px;top:1032.68px;font-size:27.2px;color:#9ea4ae;font-weight:400;">Filter tickets by tags</div>
<div class="t m" style="left:1958.5px;top:1224.54px;font-size:19.8px;color:#222;font-weight:400;-webkit-text-stroke:0.55px #222;">From</div>
<div class="t m" style="left:1958.5px;top:1332.12px;font-size:20.3px;color:#222;font-weight:400;-webkit-text-stroke:0.55px #222;">To</div>
<div style="position:absolute;left:2136.0px;top:1194.0px;width:394.0px;height:81.4px;background:#fff;border-radius:11px;box-shadow:0 8px 24px rgba(0,0,0,0.07), 0 0 2px rgba(0,0,0,0.04);"></div>
<div class="t" style="left:2163.0px;top:1222.10px;font-size:24.1px;color:#9ea4ae;font-weight:400;">Start date filter</div>
<div style="position:absolute;left:2136.0px;top:1301.6px;width:394.0px;height:81.4px;background:#fff;border-radius:11px;box-shadow:0 8px 24px rgba(0,0,0,0.07), 0 0 2px rgba(0,0,0,0.04);"></div>
<div class="t" style="left:2163.0px;top:1329.61px;font-size:23.5px;color:#9ea4ae;font-weight:400;">End date filter</div>
<div style="position:absolute;left:1958.0px;top:1447.0px;width:572.0px;height:59.0px;background:#27b09a;border-radius:30px;"></div>
<div class="t" style="left:1844.0px;width:800px;text-align:center;top:1467.42px;font-size:18.4px;color:#ffffff;font-weight:700;">Filter</div>
<div class="t" style="left:1844.0px;width:800px;text-align:center;top:1546.59px;font-size:23.4px;color:#505050;font-weight:400;">Reset filter</div>
</div>
</body></html>
